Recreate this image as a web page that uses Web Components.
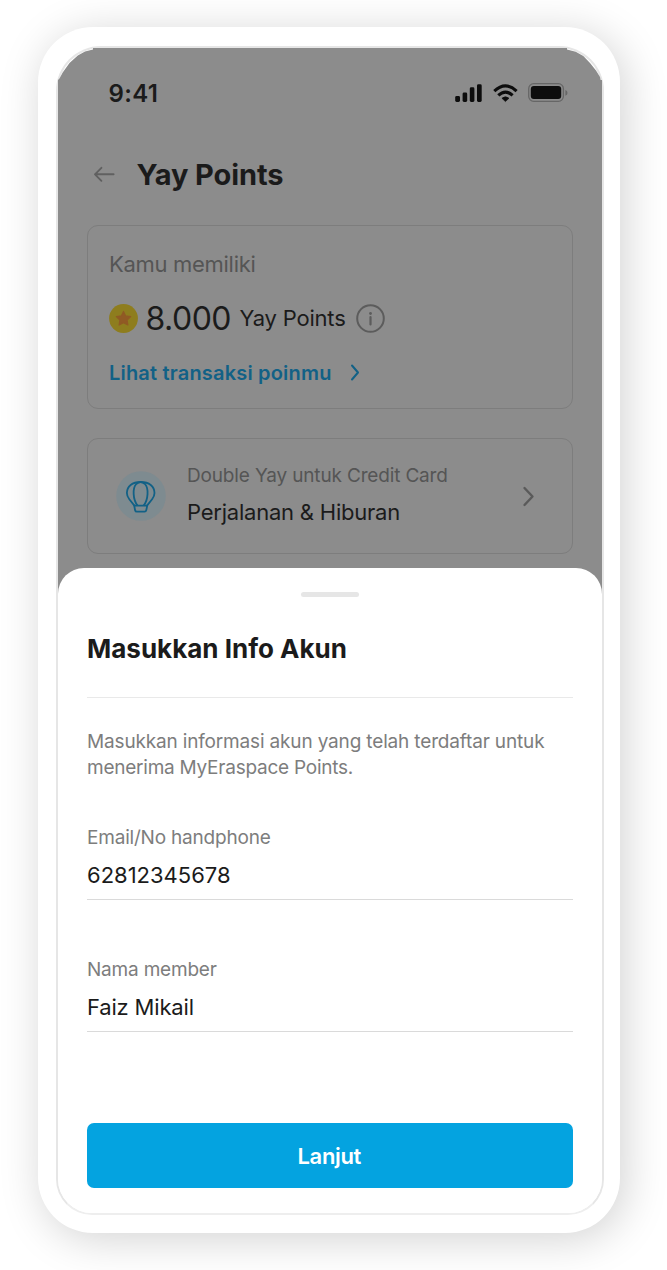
<!DOCTYPE html>
<html lang="id">
<head>
<meta charset="utf-8">
<title>Yay Points</title>
<style>
html,body{margin:0;padding:0;background:#fff}
body{width:667px;height:1270px;overflow:hidden;box-sizing:border-box;padding:27px 0 0 38px;font-family:Inter,"Liberation Sans",sans-serif;color:#1b1b1b}
</style>
</head>
<body>
<phone-frame>
  <dimmed-page>
    <status-bar>9:41</status-bar>
    <page-header>Yay Points</page-header>
    <points-card>
      <span slot="label">Kamu memiliki</span>
      <span slot="amount">8.000</span>
      <span slot="unit">Yay Points</span>
      <span slot="link">Lihat transaksi poinmu</span>
    </points-card>
    <promo-card>
      <span slot="label">Double Yay untuk Credit Card</span>
      <span slot="value">Perjalanan &amp; Hiburan</span>
    </promo-card>
  </dimmed-page>
  <bottom-sheet>
    <span slot="title">Masukkan Info Akun</span>
    <span slot="text">Masukkan informasi akun yang telah terdaftar untuk<br><span style="letter-spacing:-.24px">menerima MyEraspace Points.</span></span>
    <text-field><span slot="label">Email/No handphone</span><span slot="value">62812345678</span></text-field>
    <text-field><span slot="label">Nama member</span><span slot="value" style="letter-spacing:-.18px">Faiz Mikail</span></text-field>
    <primary-button slot="action">Lanjut</primary-button>
  </bottom-sheet>
</phone-frame>
<script>
const define = (name, html) => customElements.define(name, class extends HTMLElement {
  constructor() {
    super();
    this.attachShadow({ mode: "open" }).innerHTML = html;
  }
});

define("phone-frame", `<style>
:host{display:block;box-sizing:border-box;width:582px;height:1206px;padding:19px 16px 18px 18px;border-radius:55px;background:#fff;box-shadow:5px 6px 44px rgba(0,0,0,.18)}
.screen{box-sizing:border-box;width:548px;height:1169px;border:2px solid #e6e6e6;border-bottom-color:#eee;border-radius:45px 45px 36px 36px;background:#fff;display:flex;flex-direction:column}
</style><div class="screen"><slot></slot></div>`);

define("dimmed-page", `<style>
:host{display:flex;flex-direction:column;box-sizing:border-box;height:546px;padding:0 29px;background:#8c8c8c;
clip-path:polygon(0 32px,1.5px 30.5px,4.7px 24.5px,11.5px 15px,19.8px 7.5px,27px 3.5px,35px 1.5px,35px 0,509px 0,509px 1.5px,517.7px 3.7px,525.3px 8px,532px 15px,538px 22.5px,542px 29px,542.6px 32px,544px 32px,544px 100%,0 100%)}
</style><slot></slot>`);

define("status-bar", `<style>
:host{display:flex;align-items:center;height:90px;padding:0 5px 0 21.5px;font-weight:600;font-size:24px;letter-spacing:.35px}
.icons{margin-left:auto}
svg{display:block}
</style><slot></slot>
<svg class="icons" width="114" height="22" viewBox="454 82 114 22">
<g fill="#0d0d0d"><rect x="455.2" y="96" width="4.8" height="6" rx="1.4"/><rect x="462.6" y="92.5" width="4.6" height="9.5" rx="1.4"/><rect x="469.8" y="87.3" width="4.6" height="14.7" rx="1.4"/><rect x="477" y="84.3" width="4.7" height="17.7" rx="1.4"/>
<path d="M505.4 101.6 L501.9 98.2 Q505.4 95.4 509 98.2Z" stroke="#0d0d0d" stroke-width=".6" stroke-linejoin="round"/></g>
<g fill="none" stroke="#0d0d0d" stroke-width="3.1"><path d="M494.3 91.1 Q505.4 80.7 516.6 91.1"/><path d="M498.3 95.4 Q505.4 88.7 512.6 95.4"/></g>
<rect x="528.7" y="83.7" width="34.7" height="17.6" rx="5" fill="none" stroke="#666" stroke-width="1.3"/>
<rect x="530.8" y="86" width="30.4" height="13" rx="3" fill="#0d0d0d"/>
<path d="M565.4 90 Q567.5 90.7 567.5 92.9 Q567.5 95.1 565.4 95.8Z" fill="#666"/>
</svg>`);

define("page-header", `<style>
:host{display:flex;align-items:center;height:72px;padding-left:6px;font-weight:700;font-size:29px;letter-spacing:-.08px}
svg{margin-right:21.5px}
</style><svg width="22" height="18" viewBox="93 165 22 18" fill="none" stroke="#606060" stroke-width="1.9" stroke-linecap="round" stroke-linejoin="round"><path d="M113.6 174.3H95M101.4 167.8L95 174.3L101.4 180.8"/></svg><slot></slot>`);

define("points-card", `<style>
:host{display:flex;flex-direction:column;box-sizing:border-box;height:184px;margin-top:15px;padding:18px 21px 0;border:1.5px solid #7d7d7d;border-radius:11px}
.label{font-size:22px;line-height:41px;height:41px;color:#555;letter-spacing:-.3px}
.row{display:flex;align-items:center;height:67px}
.amount{font-size:32px;margin-left:7.5px;letter-spacing:-.5px}
.unit{font-size:22px;margin:0 10px 0 8.5px;position:relative;top:-1px;letter-spacing:-.2px}
.link{display:flex;align-items:center;height:41px;font-size:20px;font-weight:600;color:#126186;letter-spacing:.19px}
svg{display:block}
.link svg{margin-left:17px}
</style>
<div class="label"><slot name="label"></slot></div>
<div class="row">
<svg width="29" height="29" viewBox="0 0 29 29"><circle cx="14.5" cy="14.5" r="14.4" fill="#8e7d1e"/><path d="M14.5 7.4L16.7 11.9L21.7 12.6L18.1 16.1L18.9 21L14.5 18.7L10.1 21L10.9 16.1L7.3 12.6L12.3 11.9Z" fill="#905a24" stroke="#905a24" stroke-width="1.2" stroke-linejoin="round"/></svg>
<span class="amount"><slot name="amount"></slot></span><span class="unit"><slot name="unit"></slot></span>
<svg width="29" height="29" viewBox="0 0 29 29" fill="none" stroke="#5c5c5c"><circle cx="14.5" cy="14.5" r="13.3" stroke-width="2"/><path d="M14.5 13V20.5" stroke-width="2.2" stroke-linecap="round"/><circle cx="14.5" cy="9.5" r="1.4" fill="#5c5c5c" stroke="none"/></svg>
</div>
<div class="link"><slot name="link"></slot><svg width="12" height="18" viewBox="0 0 12 18" fill="none" stroke="#126186" stroke-width="2" stroke-linecap="round" stroke-linejoin="round"><path d="M3 1.5L9 8.5L3 15.5"/></svg></div>`);

define("promo-card", `<style>
:host{display:flex;align-items:center;box-sizing:border-box;height:116px;margin-top:29px;padding:0 36.5px 0 27.5px;border:1.5px solid #7d7d7d;border-radius:11px}
.text{flex:1;margin:0 0 5px 21.5px;white-space:nowrap}
.label{font-size:19px;line-height:37px;color:#555;letter-spacing:-.16px}
.value{font-size:22px;line-height:37px;letter-spacing:-.22px}
svg{display:block}
</style>
<svg width="50" height="50" viewBox="116 471 50 50" fill="none" stroke="#126186" stroke-width="1.8" stroke-linejoin="round"><circle cx="141" cy="496" r="24.8" fill="#7e8b90" stroke="none"/>
<path d="M134.4 505.6L129.3 499.3C127.5 497 126.9 495.3 126.9 493C126.9 486.2 132.3 482 140.7 482C149.1 482 154.5 486.2 154.5 493C154.5 495.3 153.9 497 152.1 499.3L147 505.6"/><path d="M137.6 505.6C132.8 499.8 132.4 488 136.2 484Q140.6 480.2 145 484C148.8 488 148.4 499.8 143.6 505.6"/><path d="M134.2 505.6H147.2L146.3 510.2Q146 511.7 144.5 511.7H136.9Q135.4 511.7 135.1 510.2Z"/></svg>
<div class="text"><div class="label"><slot name="label"></slot></div><div class="value"><slot name="value"></slot></div></div>
<svg width="14" height="22" viewBox="0 0 14 22" fill="none" stroke="#5a5a5a" stroke-width="2.4" stroke-linecap="round" stroke-linejoin="round"><path d="M2.5 3L10.5 11.5L2.5 20"/></svg>`);

define("bottom-sheet", `<style>
:host{display:flex;flex-direction:column;box-sizing:border-box;height:645px;margin-top:-26px;padding:24px 29px 25px;background:#fff;border-radius:26px 26px 34px 34px;position:relative}
.grip{width:58px;height:5px;border-radius:3px;background:#e6e6e6;align-self:center;flex:none}
.title{font-size:26px;font-weight:700;line-height:40px;margin-top:32px;height:69px;box-sizing:border-box;border-bottom:1.5px solid #e9e9e9;flex:none}
.text{font-size:19px;line-height:26px;color:#7d7d7d;margin:31px 0 44px;white-space:nowrap;letter-spacing:-.16px}
.action{margin-top:auto}
</style>
<div class="grip"></div><div class="title"><slot name="title"></slot></div><div class="text"><slot name="text"></slot></div><slot></slot><div class="action"><slot name="action"></slot></div>`);

define("text-field", `<style>
:host{display:block;box-sizing:border-box;height:75px;margin-bottom:57px;border-bottom:1.5px solid #dadada;flex:none}
.label{font-size:19px;line-height:26px;color:#7d7d7d;letter-spacing:-.2px}
.value{font-size:22px;line-height:48px}
</style><div class="label"><slot name="label"></slot></div><div class="value"><slot name="value"></slot></div>`);

define("primary-button", `<style>
:host{display:flex;align-items:center;justify-content:center;box-sizing:border-box;height:65px;padding-right:1.5px;border-radius:7px;background:#04a3e0;color:#fff;font-size:22px;font-weight:600;letter-spacing:-.35px}
</style><slot></slot>`);
</script>
</body>
</html>
